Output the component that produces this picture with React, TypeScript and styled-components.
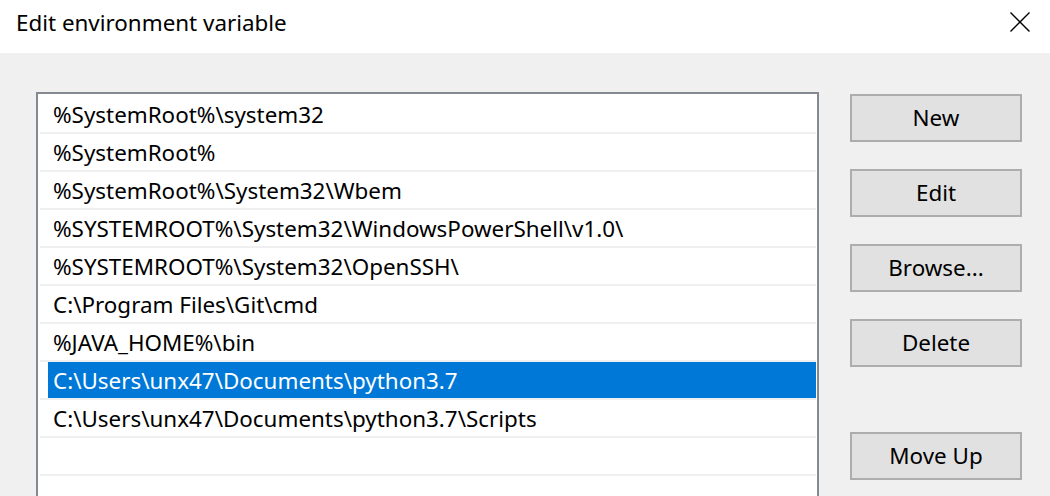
import React from "react";
import styled, { createGlobalStyle } from "styled-components";

const GlobalStyle = createGlobalStyle`
  html, body {
    margin: 0;
    padding: 0;
    overflow: hidden;
    background: #f0f0f0;
  }
  * {
    box-sizing: border-box;
  }
`;

const paths = [
  "%SystemRoot%\\system32",
  "%SystemRoot%",
  "%SystemRoot%\\System32\\Wbem",
  "%SYSTEMROOT%\\System32\\WindowsPowerShell\\v1.0\\",
  "%SYSTEMROOT%\\System32\\OpenSSH\\",
  "C:\\Program Files\\Git\\cmd",
  "%JAVA_HOME%\\bin",
  "C:\\Users\\unx47\\Documents\\python3.7",
  "C:\\Users\\unx47\\Documents\\python3.7\\Scripts",
  "",
  "",
];

const SELECTED = 7;

const App: React.FC = () => {
  return (
    <Window>
      <GlobalStyle />
      <TitleBar>
        <Title>Edit environment variable</Title>
        <CloseButton aria-label="Close">
          <svg width="20" height="20" viewBox="0 0 20 20">
            <path d="M0.5 0.5 L19.5 19.5 M19.5 0.5 L0.5 19.5" stroke="#000" strokeWidth="1.4" fill="none" />
          </svg>
        </CloseButton>
      </TitleBar>
      <Body>
        <ListBox>
          {paths.map((p, i) => (
            <Row key={i}>
              <RowLabel $selected={i === SELECTED}>{p}</RowLabel>
            </Row>
          ))}
        </ListBox>
        <ButtonColumn>
          <Button>New</Button>
          <Button>Edit</Button>
          <Button>Browse...</Button>
          <Button>Delete</Button>
          <Button $spaced>Move Up</Button>
        </ButtonColumn>
      </Body>
    </Window>
  );
};

const Window = styled.div`
  width: 1050px;
  height: 496px;
  display: flex;
  flex-direction: column;
  font-family: "Segoe UI", "Noto Sans", sans-serif;
  color: #000;
  background: #f0f0f0;
`;

const TitleBar = styled.div`
  height: 53px;
  flex-shrink: 0;
  background: #fff;
  display: flex;
  align-items: center;
  justify-content: space-between;
  padding: 0 20px 0 16px;
`;

const Title = styled.span`
  font-size: 22.4px;
  margin-top: -9px;
`;

const CloseButton = styled.div`
  width: 20px;
  height: 20px;
  margin-top: -9px;
  display: flex;
`;

const Body = styled.div`
  flex: 1;
  display: flex;
  align-items: flex-start;
  padding: 39px 0 0 36px;
  gap: 31px;
`;

const ListBox = styled.div`
  width: 783px;
  height: 430px;
  flex-shrink: 0;
  background: #fff;
  border: 2px solid #858990;
  padding: 2px 1px 0 2px;
  display: flex;
  flex-direction: column;
`;

const Row = styled.div`
  height: 38px;
  flex-shrink: 0;
  border-bottom: 2px solid #f0f0f0;
  display: flex;
`;

const RowLabel = styled.div<{ $selected?: boolean }>`
  flex: 1;
  display: flex;
  align-items: center;
  margin-left: ${(p) => (p.$selected ? "8px" : "0")};
  padding-left: ${(p) => (p.$selected ? "5px" : "13px")};
  font-size: 22.4px;
  white-space: nowrap;
  background: ${(p) => (p.$selected ? "#0078d7" : "transparent")};
  color: ${(p) => (p.$selected ? "#fff" : "#000")};
`;

const ButtonColumn = styled.div`
  width: 172px;
  display: flex;
  flex-direction: column;
  gap: 27px;
  padding-top: 2px;
`;

const Button = styled.div<{ $spaced?: boolean }>`
  height: 48px;
  background: #e1e1e1;
  border: 2px solid #adadad;
  display: flex;
  align-items: center;
  justify-content: center;
  font-size: 22.4px;
  padding-bottom: 2px;
  margin-top: ${(p) => (p.$spaced ? "38px" : "0")};
`;

export default App;
